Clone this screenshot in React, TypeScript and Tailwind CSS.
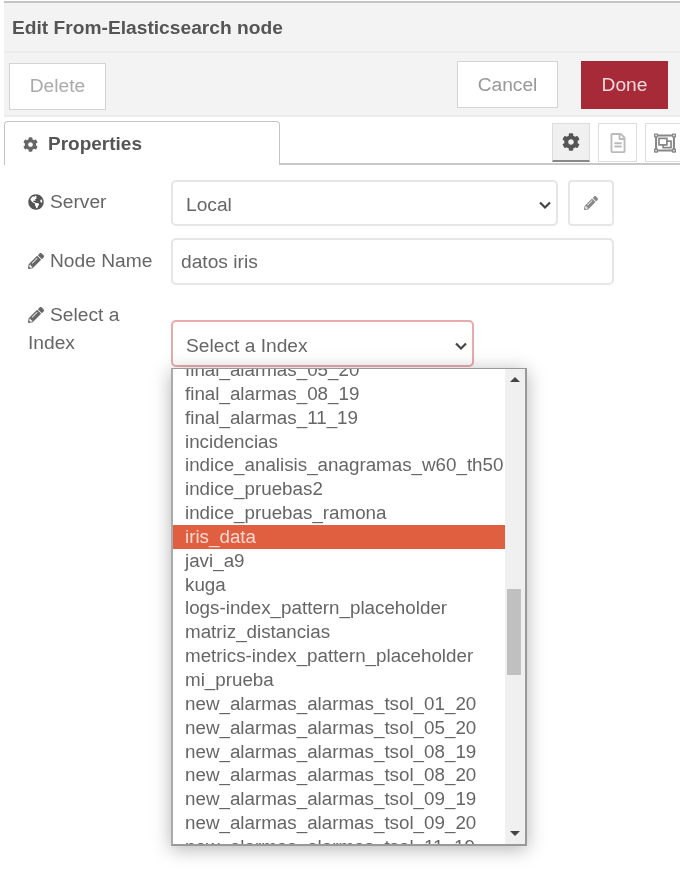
import { FaCog, FaGlobeAmericas, FaPencilAlt, FaRegFileAlt, FaRegObjectGroup } from "react-icons/fa"

const indices = [
    "final_alarmas_05_20",
    "final_alarmas_08_19",
    "final_alarmas_11_19",
    "incidencias",
    "indice_analisis_anagramas_w60_th50",
    "indice_pruebas2",
    "indice_pruebas_ramona",
    "iris_data",
    "javi_a9",
    "kuga",
    "logs-index_pattern_placeholder",
    "matriz_distancias",
    "metrics-index_pattern_placeholder",
    "mi_prueba",
    "new_alarmas_alarmas_tsol_01_20",
    "new_alarmas_alarmas_tsol_05_20",
    "new_alarmas_alarmas_tsol_08_19",
    "new_alarmas_alarmas_tsol_08_20",
    "new_alarmas_alarmas_tsol_09_19",
    "new_alarmas_alarmas_tsol_09_20",
    "new_alarmas_alarmas_tsol_11_19",
]

function Chevron() {
    return (
        <svg width="14" height="9" viewBox="0 0 14 9" fill="none" stroke="#444" strokeWidth="2.2">
            <path d="M2 1.5 7 6.5 12 1.5" />
        </svg>
    )
}

export default function App() {
    return (
        <div className="h-[878px] w-[694px] overflow-hidden bg-white pt-px pl-[4px] font-['Liberation_Sans',Arial,sans-serif] text-[19.2px] text-[#666] blur-[0.6px]">
            <div className="h-full w-[676px] overflow-hidden">
                <div className="flex h-[52px] items-center border-t-2 border-b-2 border-t-[#c4c4c4] border-b-[#ebebeb] bg-[#f3f3f3] pt-[2px] pl-[8px] text-[19.2px] font-bold text-[#555]">
                    Edit From-Elasticsearch node
                </div>

                <div className="flex h-[64px] items-start justify-between border-b-2 border-[#ebebeb] bg-[#f3f3f3] pt-[8px] pr-[12px] pl-[5px]">
                    <button className="mt-[2px] h-[47px] w-[97px] border border-[#d4d4d4] bg-white text-[#aaa]">Delete</button>
                    <div className="flex gap-[23px]">
                        <button className="h-[47px] w-[101px] border border-[#d4d4d4] bg-white pt-[1px] text-[#999]">Cancel</button>
                        <button className="h-[48px] w-[87px] bg-[#a72a38] text-[#eed9db]">Done</button>
                    </div>
                </div>

                <div className="flex h-[48px] items-end justify-between border-b-2 border-[#c8c8c8] pt-[5px]">
                    <div className="-mb-[2px] flex h-[44px] w-[276px] items-center gap-[10px] rounded-t-sm border-x border-t border-[#c4c4c4] border-b-0 bg-white pt-[1px] pl-[18px] text-[19px] font-bold text-[#555]">
                        <FaCog className="text-[15px] text-[#666]" />
                        Properties
                    </div>
                    <div className="-mr-[4px] flex gap-[8px] self-start pt-[1px]">
                        <div className="flex h-[39px] w-[38px] items-center justify-center border border-b-2 border-[#ddd] border-b-[#888] bg-[#f0f0f0] text-[#555]">
                            <FaCog className="text-[18px]" />
                        </div>
                        <div className="flex h-[39px] w-[39px] items-center justify-center border border-[#ddd] text-[#bbb]">
                            <FaRegFileAlt className="text-[20px]" />
                        </div>
                        <div className="flex h-[39px] w-[39px] items-center justify-center border border-[#ddd] text-[#888]">
                            <FaRegObjectGroup className="text-[22px]" />
                        </div>
                    </div>
                </div>

                <div className="flex flex-col pt-[15px] pl-[24px]">
                    <div className="flex items-start">
                        <label className="flex h-[44px] w-[143px] items-center gap-[6px]">
                            <FaGlobeAmericas className="text-[16px] text-[#555]" />
                            Server
                        </label>
                        <div className="flex h-[46px] w-[387px] items-center justify-between rounded-[5px] border-2 border-[#e6e6e6] pt-[5px] pr-[4px] pl-[13px]">
                            Local
                            <Chevron />
                        </div>
                        <button className="ml-[10px] flex h-[46px] w-[46px] items-center justify-center rounded-[4px] border-2 border-[#e6e6e6] text-[#888]">
                            <FaPencilAlt className="text-[14px]" />
                        </button>
                    </div>

                    <div className="mt-[12px] flex items-start">
                        <label className="flex h-[46px] w-[143px] items-center gap-[6px]">
                            <FaPencilAlt className="text-[16px] text-[#666]" />
                            Node Name
                        </label>
                        <input
                            readOnly
                            value="datos iris"
                            className="h-[47px] w-[443px] rounded-[5px] border-2 border-[#e6e6e6] pt-[1px] pl-[8px] text-[#666] outline-none"
                        />
                    </div>

                    <div className="mt-[11px] flex items-start">
                        <label className="w-[143px] pt-[5px] leading-[28px]">
                            <span className="flex items-center gap-[6px]">
                                <FaPencilAlt className="text-[16px] text-[#666]" />
                                Select a
                            </span>
                            Index
                        </label>
                        <div className="relative mt-[24px] w-[303px]">
                            <div className="flex h-[47px] items-center justify-between rounded-[5px] border-2 border-[#eaa9ac] pt-[6px] pr-[4px] pl-[13px]">
                                Select a Index
                                <Chevron />
                            </div>
                            <div className="absolute top-[48px] left-0 flex h-[478px] w-[356px] overflow-hidden border-2 border-t border-[#999] border-l-[#aaa] bg-white text-[18.8px] shadow-[0_3px_18px_rgba(0,0,0,0.3)]">
                                <ul className="-mt-[11px] min-w-0 flex-1">
                                    {indices.map((name) => (
                                        <li
                                            key={name}
                                            className={`h-[23.85px] pl-[12px] leading-[23.85px] whitespace-nowrap ${name === "iris_data" ? "bg-[#e05f41] text-[#f4d8d0]" : ""}`}
                                        >
                                            {name}
                                        </li>
                                    ))}
                                </ul>
                                <div className="relative w-[20px] shrink-0 bg-[#f0f0f0]">
                                    <span className="absolute top-[8px] left-[5px] h-0 w-0 border-x-[5px] border-b-[5px] border-x-transparent border-b-[#444]" />
                                    <span className="absolute top-[220px] left-[2px] h-[86px] w-[14px] bg-[#c0c0c0]" />
                                    <span className="absolute bottom-[8px] left-[5px] h-0 w-0 border-x-[5px] border-t-[5px] border-x-transparent border-t-[#444]" />
                                </div>
                            </div>
                        </div>
                    </div>
                </div>
            </div>
        </div>
    )
}
